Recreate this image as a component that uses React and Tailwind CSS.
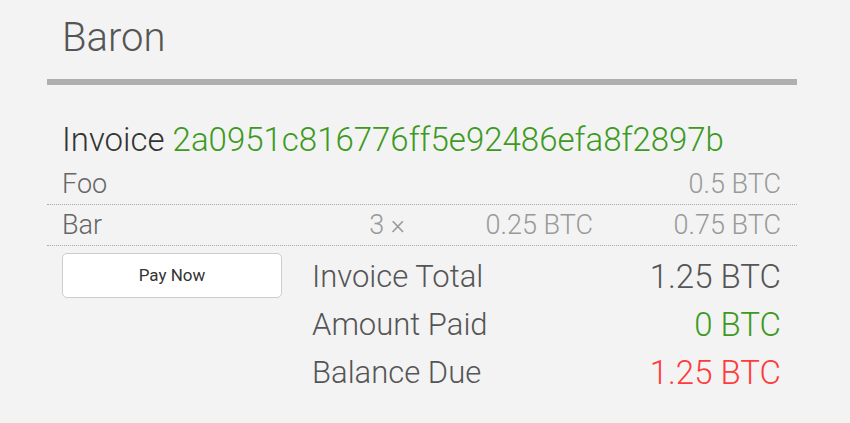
const items = [
  { name: 'Foo', qty: null, price: null, total: '0.5 BTC' },
  { name: 'Bar', qty: '3 ×', price: '0.25 BTC', total: '0.75 BTC' },
];

export default function App() {
  return (
    <div className="min-h-[423px] bg-[#f3f3f3] font-['Roboto',sans-serif] font-light">
      <div className="mx-[47px] w-[750px]">
        <h1 className="pt-[16px] pl-[15px] text-[40px] leading-[44px] text-[#555]">Baron</h1>
        <div className="mt-[19px] h-[6px] bg-[#afafaf]" />

        <h2 className="mt-[36px] pl-[15px] text-[33px] leading-[38px] text-[#333]">
          Invoice <span className="text-[#3d9a1f]">2a0951c816776ff5e92486efa8f2897b</span>
        </h2>

        <div className="mt-[5px]">
          {items.map((item) => (
            <div
              key={item.name}
              className="grid h-[41px] grid-cols-[1fr_188px_188px_188px] items-center border-b border-dotted border-[#aaa] pl-[15px] pr-[16px] text-[27px] text-[#999]"
            >
              <span className="text-[#666]">{item.name}</span>
              <span className="text-right">{item.qty}</span>
              <span className="text-right">{item.price}</span>
              <span className="text-right">{item.total}</span>
            </div>
          ))}
        </div>

        <div className="flex pl-[15px] pr-[16px] pt-[7px]">
          <button className="h-[45px] w-[220px] rounded-[5px] border border-[#ccc] bg-white text-[17px] font-normal text-[#333]">
            Pay Now
          </button>
          <div className="ml-[30px] flex-1 text-[31px] text-[#555]">
            <div className="flex h-[48px] items-center justify-between">
              <span>Invoice Total</span>
              <span className="text-[33px]">1.25 BTC</span>
            </div>
            <div className="flex h-[48px] items-center justify-between">
              <span>Amount Paid</span>
              <span className="text-[33px] text-[#3d9a1f]">0 BTC</span>
            </div>
            <div className="flex h-[48px] items-center justify-between">
              <span>Balance Due</span>
              <span className="text-[33px] text-[#ff3b3b]">1.25 BTC</span>
            </div>
          </div>
        </div>
      </div>
    </div>
  );
}
